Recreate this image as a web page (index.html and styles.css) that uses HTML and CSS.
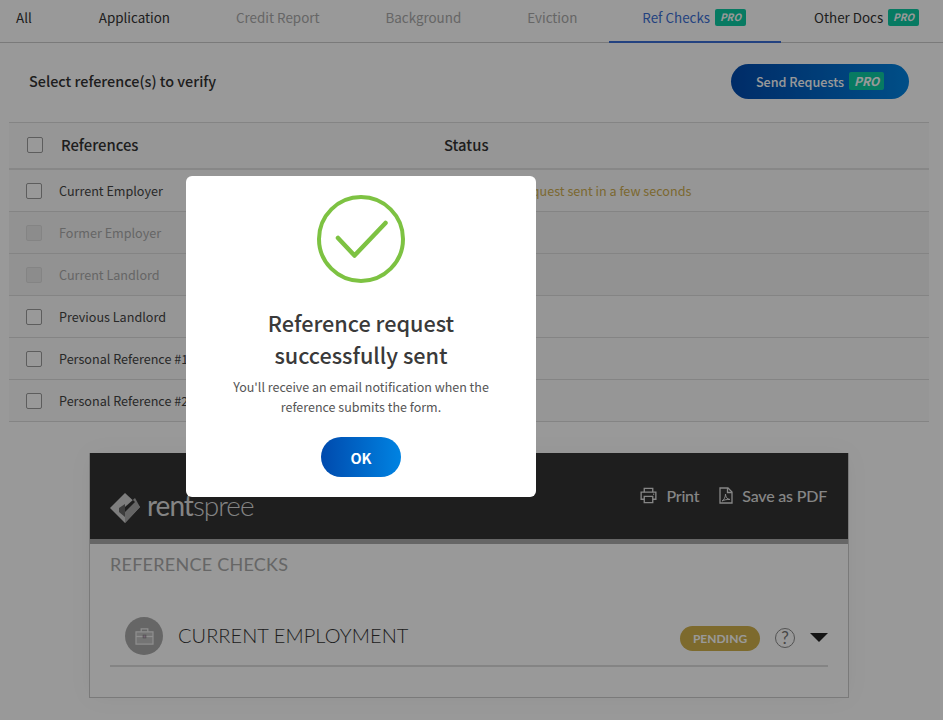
FILE: index.html
```html
<!DOCTYPE html>
<html lang="en">
<head>
  <meta charset="UTF-8">
  <title>Reference Checks</title>
  <link rel="stylesheet" href="styles.css">
</head>
<body>
  <div class="tabs">
    <a class="tab tab-first">All</a>
    <a class="tab">Application</a>
    <a class="tab tab-muted">Credit Report</a>
    <a class="tab tab-muted">Background</a>
    <a class="tab tab-muted">Eviction</a>
    <a class="tab tab-active">Ref Checks <span class="pro">PRO</span></a>
    <a class="tab tab-last">Other Docs <span class="pro">PRO</span></a>
  </div>

  <div class="toolbar">
    <h3 class="toolbar-title">Select reference(s) to verify</h3>
    <button class="send-btn">Send Requests <span class="pro pro-big">PRO</span></button>
  </div>

  <div class="ref-table">
    <div class="ref-head">
      <span class="check"></span>
      <span class="ref-name">References</span>
      <span class="ref-status">Status</span>
    </div>
    <div class="ref-row">
      <span class="check"></span>
      <span class="ref-name">Current Employer</span>
      <span class="ref-status status-wait">Your reference request sent in a few seconds</span>
    </div>
    <div class="ref-row ref-disabled">
      <span class="check"></span>
      <span class="ref-name">Former Employer</span>
    </div>
    <div class="ref-row ref-disabled">
      <span class="check"></span>
      <span class="ref-name">Current Landlord</span>
    </div>
    <div class="ref-row">
      <span class="check"></span>
      <span class="ref-name">Previous Landlord</span>
    </div>
    <div class="ref-row">
      <span class="check"></span>
      <span class="ref-name">Personal Reference #1</span>
    </div>
    <div class="ref-row">
      <span class="check"></span>
      <span class="ref-name">Personal Reference #2</span>
    </div>
  </div>

  <div class="report">
    <div class="report-top">
      <div class="logo">
        <svg class="logo-mark" viewBox="0 0 30 30" width="30" height="30">
          <path d="M15 0 L30 14 L15 30 L0 15 Z" fill="#d2d2d2"/>
          <path d="M9 15 L15 11 L15 24 L9 19 Z" fill="#666"/>
          <path d="M15 24 L15 14 L25 5 L30 14 L15 30 Z" fill="#a8a8a8"/>
          <path d="M15 14 L23 7 L25 9 L15 19 Z" fill="#333"/>
        </svg>
        <span class="logo-text"><b>rent</b>spree</span>
      </div>
      <div class="report-actions">
        <a class="report-link">
          <svg viewBox="0 0 18 17" width="17" height="17" fill="none" stroke="#fff" stroke-width="1.4">
            <path d="M4.5 5V1h9v4"/>
            <path d="M4.5 12.5H1.2V5h15.6v7.5h-3.3"/>
            <path d="M4.5 9.5h9V16h-9z"/>
            <path d="M14 7.2h1"/>
          </svg>
          Print
        </a>
        <a class="report-link">
          <svg viewBox="0 0 14 17" width="14" height="17" fill="none" stroke="#fff" stroke-width="1.3">
            <path d="M1 1h8l4 4v11H1z"/>
            <path d="M8.5 1v4.500H13"/>
            <path d="M3 14c2-1 3.500-4 3.500-7 0 3 1.500 5 4.500 5.500-3-.2-5.500.3-8 1.500z" stroke-width="1"/>
          </svg>
          Save as PDF
        </a>
      </div>
    </div>
    <div class="report-body">
      <h4 class="report-title">REFERENCE CHECKS</h4>
      <div class="report-row">
        <span class="round-icon">
          <svg viewBox="0 0 20 18" width="19" height="17" fill="none" stroke="#eee" stroke-width="1.300">
            <path d="M1 4h18v13H1z" fill="#ddd" fill-opacity=".45"/>
            <path d="M6.500 4V1h7v3"/>
            <path d="M1 9h18"/>
            <rect x="8.500" y="7.500" width="3" height="3" fill="#c9a9c9" stroke="#888" stroke-width=".8"/>
          </svg>
        </span>
        <span class="report-row-name">CURRENT EMPLOYMENT</span>
        <span class="pill">PENDING</span>
        <span class="help">?</span>
        <span class="caret"></span>
      </div>
    </div>
  </div>

  <div class="overlay">
    <div class="modal">
      <svg class="modal-check" viewBox="0 0 88 88" width="88" height="88" fill="none" stroke="#7dc242">
        <circle cx="44" cy="44" r="42" stroke-width="4"/>
        <path d="M21 43 L37.500 60.500 L68.500 28" stroke-width="4.500" stroke-linecap="round" stroke-linejoin="round"/>
      </svg>
      <h2 class="modal-title">Reference request<br>successfully sent</h2>
      <p class="modal-text">You'll receive an email notification when the<br>reference submits the form.</p>
      <button class="ok-btn">OK</button>
    </div>
  </div>
</body>
</html>
```

FILE: styles.css
```css
* {
  box-sizing: border-box;
}

body {
  margin: 0;
  background: #fff;
  color: #444;
  font-family: "Noto Sans CJK SC", "Open Sans", sans-serif;
  font-size: 12.6px;
  overflow: hidden;
  height: 720px;
}

.tabs {
  display: flex;
  height: 43px;
  border-bottom: 1px solid #ccc;
}

.tab {
  display: flex;
  align-items: center;
  gap: 5px;
  height: 42px;
  padding: 0 33px 8px;
  font-size: 13.400px;
  color: #333;
  white-space: nowrap;
}

.tab-first {
  padding-left: 16px;
  padding-right: 34px;
}

.tab-muted {
  color: #aaa;
}

.tab-active {
  margin-left: -1px;
  padding-right: 35px;
  padding-bottom: 7px;
  height: 43px;
  color: #3b6fd6;
  border-bottom: 2px solid #3b6fd6;
}

.tab-last {
  padding-right: 0;
}

.pro {
  display: inline-block;
  width: 31px;
  height: 17px;
  border-radius: 2px;
  background: #0ccba4;
  color: #fff;
  font-size: 10px;
  font-weight: 700;
  font-style: italic;
  line-height: 16px;
  text-align: center;
}

.toolbar {
  display: flex;
  justify-content: space-between;
  align-items: center;
  height: 79px;
  padding: 0 34px 3px 29px;
}

.toolbar-title {
  margin: 0 0 2px;
  font-size: 14.400px;
  font-weight: 500;
  color: #333;
}

.send-btn {
  display: flex;
  align-items: center;
  justify-content: center;
  gap: 5px;
  width: 178px;
  height: 35px;
  border: none;
  border-radius: 18px;
  background: linear-gradient(90deg, #004aad, #0083e2);
  color: #fff;
  font-family: inherit;
  font-size: 12.600px;
  font-weight: 500;
}

.pro-big {
  width: 35px;
  height: 18px;
  font-size: 12px;
  line-height: 17px;
}

.ref-table {
  margin: 0 14px 0 9px;
  border-top: 1px solid #ddd;
  background: #fafafa;
}

.ref-head,
.ref-row {
  display: flex;
  align-items: center;
}

.ref-head {
  height: 47px;
  padding: 0 0 2px 18px;
  border-bottom: 2px solid #e2e2e2;
  font-size: 14.800px;
  font-weight: 500;
  color: #333;
}

.ref-row {
  height: 42px;
  padding-left: 17px;
  border-bottom: 1px solid #ddd;
}

.ref-disabled {
  background: #f3f3f3;
  color: #aaa;
}

.check {
  flex: none;
  width: 16px;
  height: 16px;
  margin-right: 17px;
  border: 1px solid #9b9b9b;
  border-radius: 2px;
  background: #fff;
}

.ref-head .check {
  margin-right: 18px;
}

.ref-disabled .check {
  border-color: #ddd;
  background: #eaeaea;
}

.ref-name {
  width: 368px;
  flex: none;
}

.ref-head .ref-name {
  width: 383px;
}

.ref-head .ref-status {
  font-weight: 500;
}

.ref-row .ref-status {
  margin-left: 6px;
}

.status-wait {
  color: #cfae50;
}

.report {
  width: 760px;
  height: 245px;
  margin: 31px 0 0 89px;
  border: 1px solid #ccc;
  border-top: none;
  font-family: Lato, sans-serif;
  box-shadow: 0 0 24px rgba(0, 0, 0, .04);
}

.report-top {
  display: flex;
  justify-content: space-between;
  align-items: flex-start;
  height: 91px;
  padding: 0 21px 0 20px;
  background: #333;
  border-bottom: 5px solid #aaa;
}

.logo {
  display: flex;
  align-items: flex-start;
  gap: 7px;
  margin-top: 40px;
}

.logo-text {
  margin-top: -3px;
  font-size: 28px;
  font-weight: 300;
  line-height: 30px;
  color: #ddd;
  letter-spacing: -1px;
}

.logo-text b {
  font-weight: 400;
}

.report-actions {
  display: flex;
  gap: 20px;
  margin-top: 33px;
}

.report-link {
  display: flex;
  align-items: center;
  gap: 9px;
  color: #fff;
  font-size: 16px;
  font-weight: 500;
  letter-spacing: -.2px;
  opacity: .85;
}

.report-body {
  padding: 9px 20px 0;
}

.report-title {
  margin: 0;
  font-size: 18px;
  font-weight: 400;
  line-height: 22px;
  letter-spacing: .25px;
  color: #aaa;
}

.report-row {
  display: flex;
  align-items: center;
  height: 50px;
  margin-top: 42px;
  padding: 0 0 10px 15px;
  border-bottom: 2px solid #ddd;
}

.round-icon {
  display: flex;
  align-items: center;
  justify-content: center;
  width: 38px;
  height: 38px;
  border-radius: 50%;
  background: #aaa;
}

.report-row-name {
  flex: 1;
  margin: 0 0 2px 15px;
  font-size: 20px;
  font-weight: 300;
  color: #333;
  letter-spacing: .05px;
}

.pill {
  width: 80px;
  height: 25px;
  margin-top: 4px;
  border-radius: 13px;
  background: #d0b14c;
  color: #fff;
  font-size: 12px;
  font-weight: 700;
  line-height: 25px;
  text-align: center;
}

.help {
  width: 20px;
  height: 20px;
  margin: 4px 0 0 15px;
  border: 1.500px solid #8a8a8a;
  border-radius: 50%;
  color: #777;
  font-size: 17px;
  line-height: 17px;
  text-align: center;
}

.caret {
  width: 0;
  height: 0;
  margin: 2px 0 0 15px;
  border-left: 9px solid transparent;
  border-right: 9px solid transparent;
  border-top: 9px solid #222;
}

.overlay {
  position: fixed;
  inset: 0;
  background: rgba(0, 0, 0, .4);
}

.modal {
  position: absolute;
  left: 186px;
  top: 176px;
  display: flex;
  flex-direction: column;
  align-items: center;
  width: 350px;
  height: 321px;
  padding-top: 19px;
  border-radius: 6px;
  background: #fff;
  text-align: center;
}

.modal-title {
  margin: 24px 0 0;
  font-size: 21.650px;
  font-weight: 500;
  line-height: 32px;
  color: #3a3a3a;
}

.modal-text {
  margin: 6px 0 0;
  font-size: 12.500px;
  line-height: 20px;
  color: #555;
}

.ok-btn {
  width: 80px;
  height: 40px;
  margin-top: 20px;
  border: none;
  border-radius: 20px;
  background: linear-gradient(90deg, #004aad, #0083e2);
  color: #fff;
  font-family: inherit;
  font-size: 14.500px;
  font-weight: 700;
}
```
